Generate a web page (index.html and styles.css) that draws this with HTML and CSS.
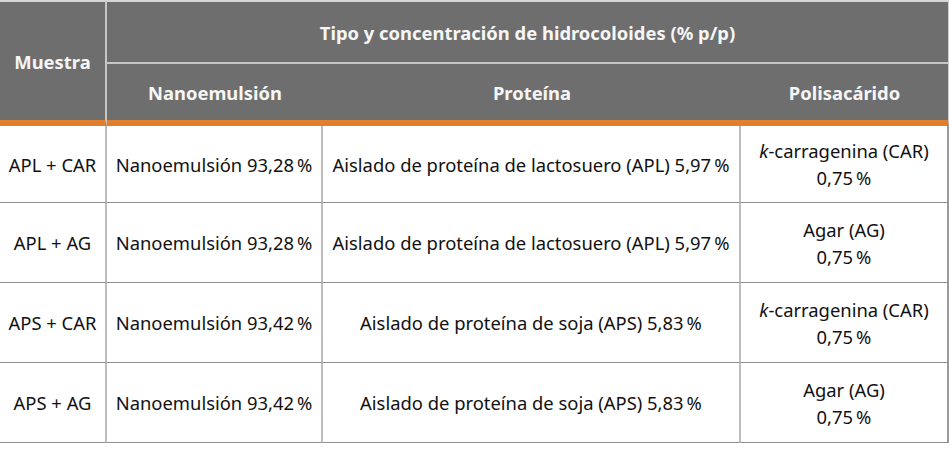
FILE: index.html
```html
<!DOCTYPE html>
<html lang="es">
<head>
<meta charset="utf-8">
<title>Hidrocoloides</title>
<link rel="stylesheet" href="styles.css">
</head>
<body>
<table class="data">
  <colgroup>
    <col class="c1">
    <col class="c2">
    <col class="c3">
    <col class="c4">
  </colgroup>
  <thead>
    <tr class="h1">
      <th rowspan="2" class="muestra">Muestra</th>
      <th colspan="3" class="group">Tipo y concentración de hidrocoloides (% p/p)</th>
    </tr>
    <tr class="h2">
      <th>Nanoemulsión</th>
      <th>Proteína</th>
      <th class="last">Polisacárido</th>
    </tr>
  </thead>
  <tbody>
    <tr class="first">
      <td>APL + CAR</td>
      <td>Nanoemulsión 93,28&#8239;%</td>
      <td>Aislado de proteína de lactosuero (APL) 5,97&#8239;%</td>
      <td class="last"><i>k</i>-carragenina (CAR)<br>0,75&#8239;%</td>
    </tr>
    <tr>
      <td>APL + AG</td>
      <td>Nanoemulsión 93,28&#8239;%</td>
      <td>Aislado de proteína de lactosuero (APL) 5,97&#8239;%</td>
      <td class="last">Agar (AG)<br>0,75&#8239;%</td>
    </tr>
    <tr>
      <td>APS + CAR</td>
      <td>Nanoemulsión 93,42&#8239;%</td>
      <td>Aislado de proteína de soja (APS) 5,83&#8239;%</td>
      <td class="last"><i>k</i>-carragenina (CAR)<br>0,75&#8239;%</td>
    </tr>
    <tr>
      <td>APS + AG</td>
      <td>Nanoemulsión 93,42&#8239;%</td>
      <td>Aislado de proteína de soja (APS) 5,83&#8239;%</td>
      <td class="last">Agar (AG)<br>0,75&#8239;%</td>
    </tr>
  </tbody>
</table>
</body>
</html>
```
FILE: styles.css
```css
html, body {
  margin: 0;
  padding: 0;
  background: #ffffff;
}

.data {
  width: 949px;
  border-spacing: 0;
  border-collapse: separate;
  table-layout: fixed;
  font-family: "Noto Sans", "Open Sans", sans-serif;
  font-size: 18.4px;
  line-height: 27px;
  color: #111111;
}

.c1 { width: 107px; }
.c2 { width: 216px; }
.c3 { width: 418px; }
.c4 { width: 208px; }

.data th,
.data td {
  padding: 0 2px;
  text-align: center;
  vertical-align: middle;
}

.data th {
  background: #6e6e6e;
  color: #f6f6f6;
  font-weight: 700;
}

.h1 th {
  border-top: 2px solid #d6d6d6;
  height: 60px;
}

.muestra {
  border-right: 2px solid #c6c6c6;
  border-bottom: 6px solid #e27f2f;
}

.group {
  border-bottom: 2px solid #c6c6c6;
  border-right: 1px solid #cfcfcf;
}

.h2 th {
  height: 56px;
  border-bottom: 6px solid #e27f2f;
}

.h2 th.last {
  border-right: 1px solid #cfcfcf;
}

.data td {
  height: 80px;
  border-bottom: 1px solid #8e8e8e;
  border-right: 2px solid #bcbcbc;
  box-sizing: border-box;
}

.data tr.first td {
  height: 77px;
}

.data td.last {
  border-right: 2px solid #9a9a9a;
}

.data td i {
  font-style: italic;
}
```
